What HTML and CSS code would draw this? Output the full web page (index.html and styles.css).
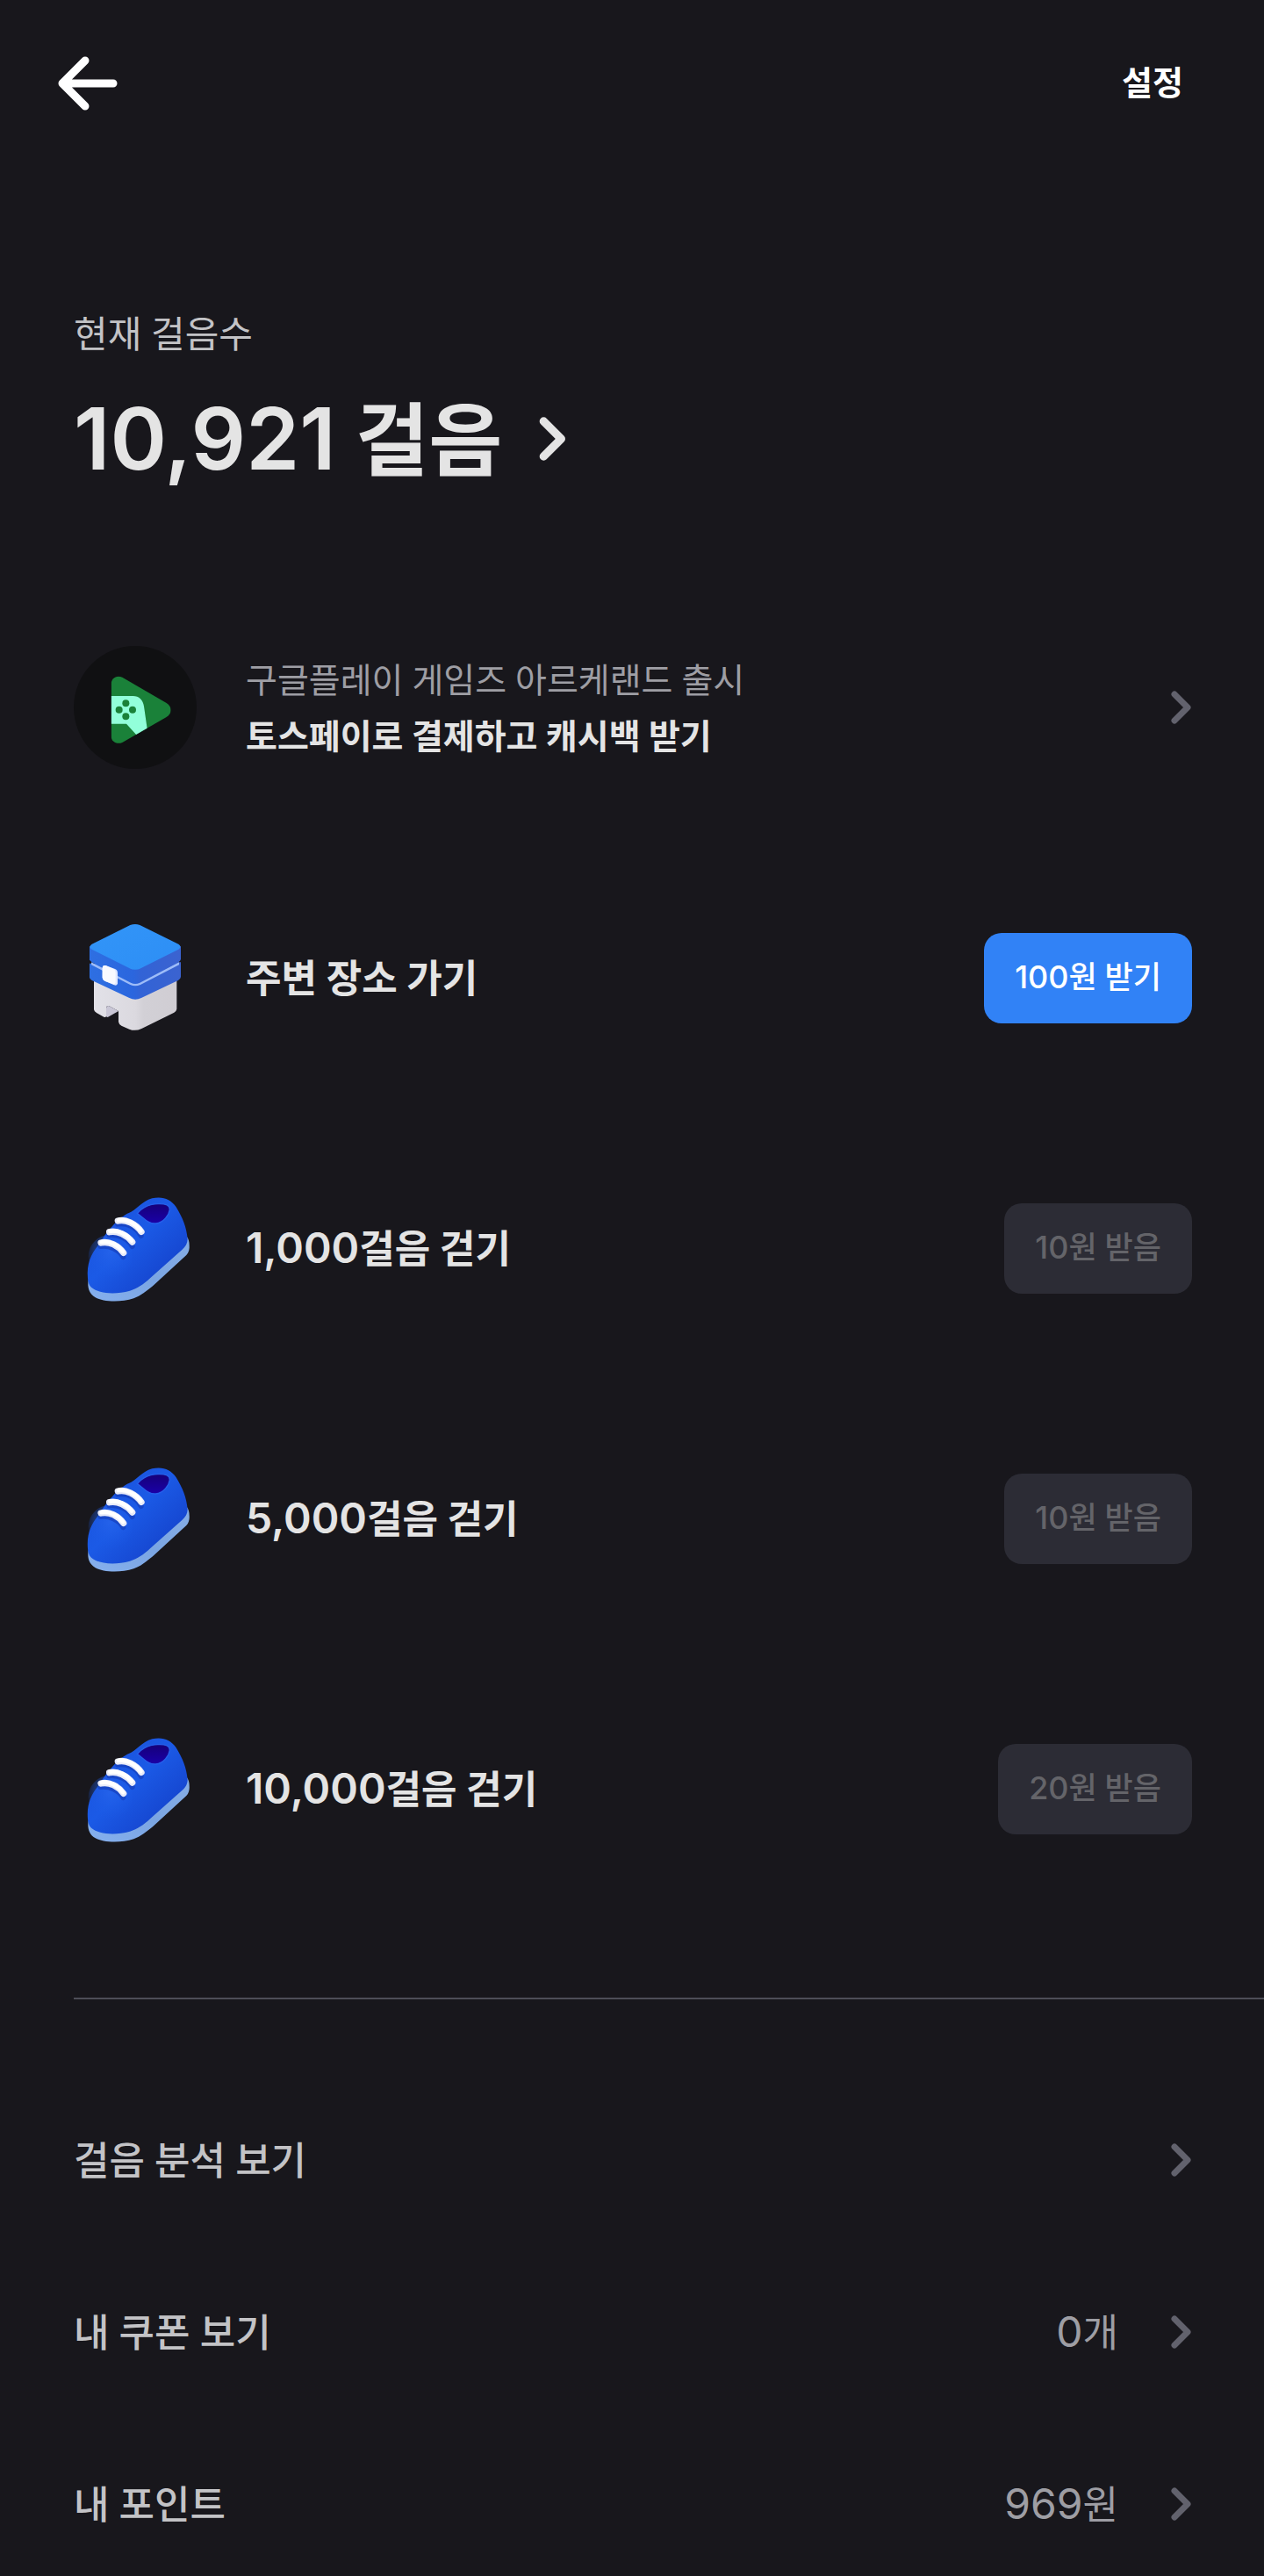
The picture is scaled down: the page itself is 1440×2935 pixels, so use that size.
FILE: index.html
```html
<!DOCTYPE html>
<html lang="ko">
  <head>
    <meta charset="utf-8">
    <meta name="viewport" content="width=device-width, initial-scale=1">
    <title>만보기</title>
    <link rel="stylesheet" href="styles.css">
  </head>
  <body>
    <!-- shared icons -->
    <svg class="sprite" aria-hidden="true">
      <defs>
        <linearGradient id="shoe-body" x1="0" y1="0" x2="1" y2="1">
          <stop offset="0" stop-color="#1a50d8"/>
          <stop offset="0.45" stop-color="#1b5ae6"/>
          <stop offset="0.75" stop-color="#1648d2"/>
          <stop offset="1" stop-color="#1233b4"/>
        </linearGradient>
        <radialGradient id="shoe-toe" cx="0.5" cy="0.4" r="0.6">
          <stop offset="0" stop-color="#2462ea"/>
          <stop offset="1" stop-color="#1b5ae6" stop-opacity="0"/>
        </radialGradient>
        <linearGradient id="shoe-sole" x1="0" y1="1" x2="1" y2="0">
          <stop offset="0" stop-color="#86b0ee"/>
          <stop offset="0.5" stop-color="#7ba5e2"/>
          <stop offset="1" stop-color="#86aee6"/>
        </linearGradient>
        <linearGradient id="shoe-inside" x1="0" y1="0" x2="0" y2="1">
          <stop offset="0" stop-color="#160079"/>
          <stop offset="1" stop-color="#1a00a8"/>
        </linearGradient>
      </defs>
      <symbol id="chevron" viewBox="0 0 24 40">
        <path d="M4 5l15 15L4 35" fill="none" stroke="currentColor" stroke-width="7" stroke-linecap="round" stroke-linejoin="round"/>
      </symbol>
      <symbol id="shoe" viewBox="0 6 420 420">
        <path d="M50 325C46 350 52 372 74 385C100 400 160 403 205 388C228 380 250 362 270 346L385 240C394 231 396 218 395 206C395 194 392 184 387 178L220 320L60 320Z" fill="url(#shoe-sole)"/>
        <path d="M48 320C44 268 58 238 84 206C108 166 152 110 190 95C210 90 232 56 268 46C302 38 332 48 350 76C372 112 386 146 389 186C389 200 382 212 370 222L262 318C238 340 218 354 192 362C140 376 86 372 60 350C52 342 49 332 48 320Z" fill="url(#shoe-body)"/>
        <ellipse cx="125" cy="245" rx="75" ry="75" fill="url(#shoe-toe)"/>
        <path d="M217 98C226 84 250 66 288 65C316 64 328 70 328 84C326 102 308 130 280 132C252 134 236 108 217 98Z" fill="url(#shoe-inside)" stroke="#2560ea" stroke-width="4"/>
        <g fill="none" stroke="#143ab4" stroke-width="18" stroke-linecap="round" opacity="0.6">
          <path d="M150 134C182 128 216 146 230 174"/>
          <path d="M121 172C152 168 186 184 200 210"/>
          <path d="M92 210C122 206 156 222 169 246"/>
        </g>
        <g fill="none" stroke="#e8ebf8" stroke-width="22" stroke-linecap="round">
          <path d="M151 123C178 116 212 134 231 160"/>
          <path d="M122 161C150 155 182 172 200 195"/>
          <path d="M93 198C122 191 152 208 170 232"/>
        </g>
        <g fill="none" stroke="#ffffff" stroke-width="14" stroke-linecap="round">
          <path d="M153 120C180 115 212 133 229 156"/>
          <path d="M124 158C152 153 182 170 198 191"/>
          <path d="M95 195C122 190 152 206 168 228"/>
        </g>
      </symbol>
    </svg>

    <header>
      <button class="back" type="button" aria-label="뒤로">
        <svg viewBox="0 0 80 80">
          <path d="M69 40H12M37 14L11 40l26 26" fill="none" stroke="currentColor" stroke-width="9" stroke-linecap="round" stroke-linejoin="round"/>
        </svg>
      </button>
      <button class="settings" type="button">설정</button>
    </header>

    <main>
      <section class="summary">
        <p>현재 걸음수</p>
        <h1>
          <a href="#steps"><span><span class="num">10,921</span> 걸음</span> <svg class="chevron-big"><use href="#chevron"/></svg></a>
        </h1>
      </section>

      <ul class="missions">
        <li>
          <a class="banner" href="#event">
            <svg class="icon" viewBox="0 0 420 420">
              <defs>
                <clipPath id="play-clip">
                  <path d="M128 130C128 110 146 98 166 107L317 195C337 208 337 230 317 243L166 330C146 338 128 326 128 308Z"/>
                </clipPath>
              </defs>
              <circle cx="210" cy="210" r="210" fill="#101012"/>
              <g clip-path="url(#play-clip)">
                <path d="M120 90h230v260H120z" fill="#1a8139"/>
                <path d="M120 171h82c22 0 35 14 38 35l14 98-40 0-34-38h-60z" fill="#92ffda"/>
                <g fill="#1a8139">
                  <circle cx="178" cy="196" r="12"/>
                  <circle cx="155" cy="218" r="12"/>
                  <circle cx="201" cy="218" r="12"/>
                  <circle cx="178" cy="241" r="12"/>
                </g>
              </g>
            </svg>
            <span class="text">
              <span class="caption">구글플레이 게임즈 아르케랜드 출시</span>
              <strong>토스페이로 결제하고 캐시백 받기</strong>
            </span>
            <svg class="chevron"><use href="#chevron"/></svg>
          </a>
        </li>
        <li>
          <svg class="icon" viewBox="0 27 420 420">
            <defs>
              <linearGradient id="lid-top" x1="0" y1="0" x2="1" y2="1">
                <stop offset="0" stop-color="#3295f8"/>
                <stop offset="1" stop-color="#2d8ef5"/>
              </linearGradient>
              <linearGradient id="lid-side" x1="0" y1="0" x2="1" y2="0">
                <stop offset="0" stop-color="#2e6fe2"/>
                <stop offset="0.48" stop-color="#2b66de"/>
                <stop offset="0.56" stop-color="#3263d6"/>
                <stop offset="1" stop-color="#3b63d0"/>
              </linearGradient>
              <linearGradient id="base" x1="0" y1="0" x2="1" y2="0">
                <stop offset="0" stop-color="#e2e1e8"/>
                <stop offset="0.5" stop-color="#dbd9df"/>
                <stop offset="0.6" stop-color="#d2d0d6"/>
                <stop offset="1" stop-color="#d0cdd3"/>
              </linearGradient>
            </defs>
            <path d="M69 240V346Q70 352 78 357L103 371Q110 374 111 368V340Q113 330 124 335L153 351V388Q154 396 163 401L190 413Q210 421 232 411L343 356Q351 351 352 344V240Z" fill="url(#base)"/>
            <path d="M111 370V340Q113 330 124 335L153 351 116 372Z" fill="#c9c6d6"/>
            <path d="M54 188V236Q55 242 62 246L190 306Q210 316 231 306L357 246Q365 242 366 234V184Z" fill="url(#lid-side)"/>
            <path d="M60 184L195 254Q210 262 226 254L360 184V193L228 261Q210 269 193 261L60 193Z" fill="#9dbcf8"/>
            <path d="M54 130V175Q55 180 62 184L192 248Q210 256 229 248L358 184Q365 180 366 174V130Z" fill="url(#lid-side)"/>
            <path d="M62 122L193 57Q210 51 226 57L358 122Q371 131 358 140L229 205Q210 214 191 205L62 140Q49 131 62 122Z" fill="url(#lid-top)"/>
            <path d="M98 205Q98 193 109 195L141 207Q150 211 150 220V256Q149 266 138 262L106 248Q98 244 98 236Z" fill="#dfe8ff"/>
            <path d="M98 205Q98 193 109 195L136 207Q143 211 143 220V253Q143 260 135 259L106 248Q98 244 98 236Z" fill="#f8faff"/>
          </svg>
          <span class="title">주변 장소 가기</span>
          <button class="reward" type="button"><span class="num">100</span>원 받기</button>
        </li>
        <li>
          <svg class="icon"><use href="#shoe"/></svg>
          <span class="title"><span class="num">1,000</span>걸음 걷기</span>
          <button class="reward" type="button" disabled><span class="num">10</span>원 받음</button>
        </li>
        <li>
          <svg class="icon"><use href="#shoe"/></svg>
          <span class="title"><span class="num">5,000</span>걸음 걷기</span>
          <button class="reward" type="button" disabled><span class="num">10</span>원 받음</button>
        </li>
        <li>
          <svg class="icon"><use href="#shoe"/></svg>
          <span class="title"><span class="num">10,000</span>걸음 걷기</span>
          <button class="reward" type="button" disabled><span class="num">20</span>원 받음</button>
        </li>
      </ul>

      <hr>

      <nav>
        <a href="#analysis">걸음 분석 보기 <svg class="chevron"><use href="#chevron"/></svg></a>
        <a href="#coupons">내 쿠폰 보기 <span class="value"><span class="num">0</span>개</span> <svg class="chevron"><use href="#chevron"/></svg></a>
        <a href="#points">내 포인트 <span class="value"><span class="num">969</span>원</span> <svg class="chevron"><use href="#chevron"/></svg></a>
      </nav>
    </main>
  </body>
</html>
```

FILE: styles.css
```css
:root {
  --background: #18171c;
  --text-strong: #e4e4e4;
  --text: #c3c3c6;
  --text-weak: #9e9ea4;
  --inactive: #62626d;
  --inactive-text: #646469;
  --inactive-bg: #2c2c35;
  --primary: #3182f6;
  --line: #4d4d57;
  --left: 84px;
  --right: 82px;
}

* {
  box-sizing: border-box;
}

body {
  margin: 0;
  background: var(--background);
  color: var(--text-strong);
  font-family: Lato, "Noto Sans CJK KR", sans-serif;
  font-size: 44px;
  line-height: 60px;
}

a {
  color: inherit;
  text-decoration: none;
}

button {
  border: none;
  background: none;
  color: inherit;
  font: inherit;
  cursor: pointer;
}

svg {
  flex: none;
}

.sprite {
  position: absolute;
  width: 0;
  height: 0;
}

/* digits are drawn a little larger than the hangul beside them */
.num {
  font-family: Inter, sans-serif;
  font-size: 48px;
  line-height: 1;
}

header {
  display: flex;
  align-items: center;
  justify-content: space-between;
  height: 190px;
  padding: 0 92px 0 60px;
}

.back {
  width: 80px;
  height: 80px;
  padding: 0;
  color: #fff;
}

.back svg {
  display: block;
}

.settings {
  padding: 0 0 4px;
  color: #fff;
  font-size: 38px;
  font-weight: 700;
}

.summary {
  padding: 160px var(--right) 0 var(--left);
}

.summary p {
  margin: 0;
  color: var(--text);
  font-size: 42px;
}

h1 {
  margin: 30px 0 0;
  font-size: 91px;
  font-weight: 700;
  line-height: 120px;
}

h1 a {
  display: flex;
  align-items: center;
  gap: 42px;
}

h1 .num {
  font-size: 98px;
  font-weight: 600;
}

.chevron-big {
  width: 32px;
  height: 54px;
}

.chevron {
  width: 24px;
  height: 40px;
  color: var(--inactive);
}

.missions {
  display: flex;
  flex-direction: column;
  gap: 168px;
  margin: 176px 0 168px;
  padding: 0 var(--right) 0 var(--left);
  list-style: none;
}

.missions li,
.banner {
  display: flex;
  flex: 1;
  align-items: center;
}

.icon {
  width: 140px;
  height: 140px;
  margin-right: 56px;
}

.text {
  display: flex;
  flex: 1;
  flex-direction: column;
  font-size: 39px;
  line-height: 64px;
}

.caption {
  color: var(--text-weak);
}

.title {
  flex: 1;
  font-weight: 700;
}

.title .num {
  font-weight: 600;
}

.reward {
  height: 103px;
  padding: 0 35px 4px;
  border-radius: 20px;
  background: var(--primary);
  color: #fff;
  font-size: 35px;
  font-weight: 500;
}

.reward .num {
  font-size: 36px;
}

.reward:disabled {
  background: var(--inactive-bg);
  color: var(--inactive-text);
  cursor: default;
}

hr {
  height: 2px;
  margin: 0 0 0 var(--left);
  border: none;
  background: var(--line);
}

nav {
  display: flex;
  flex-direction: column;
  gap: 76px;
  padding: 123px var(--right) 0 var(--left);
}

nav a {
  display: flex;
  align-items: center;
  height: 120px;
  color: var(--text);
  font-weight: 500;
}

nav .chevron {
  margin-left: auto;
}

.value {
  margin-left: auto;
  color: var(--text-weak);
  font-weight: 400;
}

.value + .chevron {
  margin-left: 60px;
}
```
